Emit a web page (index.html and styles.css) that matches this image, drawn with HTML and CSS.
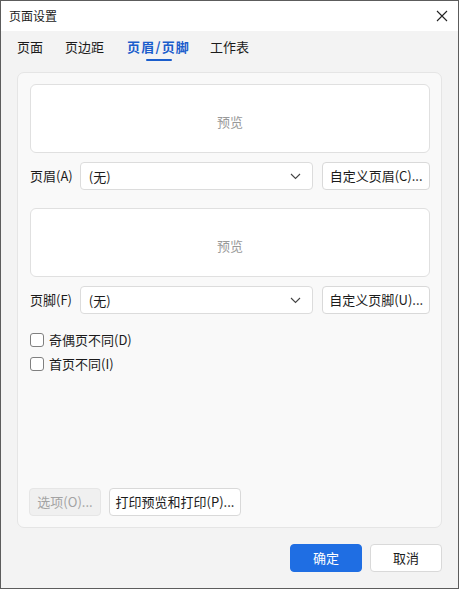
FILE: index.html
```html
<!DOCTYPE html>
<html lang="zh">
<head>
<meta charset="utf-8">
<title>页面设置</title>
<link rel="stylesheet" href="styles.css">
</head>
<body>
<div class="window">
  <div class="titlebar">
    <span class="title">页面设置</span>
    <span class="close">
      <svg width="12" height="12" viewBox="0 0 12 12"><path d="M1 1L11 11M11 1L1 11" stroke="#222" stroke-width="1.1" fill="none"/></svg>
    </span>
  </div>
  <div class="tabs">
    <div class="tab t1"><span class="tab-label">页面</span><span class="tab-line"></span></div>
    <div class="tab t2"><span class="tab-label">页边距</span><span class="tab-line"></span></div>
    <div class="tab t3 active"><span class="tab-label">页眉/页脚</span><span class="tab-line"></span></div>
    <div class="tab t4"><span class="tab-label">工作表</span><span class="tab-line"></span></div>
  </div>
  <div class="panel">
    <div class="preview">预览</div>
    <div class="row">
      <span class="label">页眉(A)</span>
      <div class="select"><span>(无)</span>
        <svg width="11" height="7" viewBox="0 0 11 7"><path d="M1 1L5.5 5.5L10 1" stroke="#444" stroke-width="1.1" fill="none"/></svg>
      </div>
      <button class="btn custom">自定义页眉(C)...</button>
    </div>
    <div class="preview second">预览</div>
    <div class="row">
      <span class="label">页脚(F)</span>
      <div class="select"><span>(无)</span>
        <svg width="11" height="7" viewBox="0 0 11 7"><path d="M1 1L5.5 5.5L10 1" stroke="#444" stroke-width="1.1" fill="none"/></svg>
      </div>
      <button class="btn custom">自定义页脚(U)...</button>
    </div>
    <label class="check first"><span class="box"></span>奇偶页不同(D)</label>
    <label class="check"><span class="box"></span>首页不同(I)</label>
    <div class="spacer"></div>
    <div class="panel-buttons">
      <button class="btn disabled">选项(O)...</button>
      <button class="btn print">打印预览和打印(P)...</button>
    </div>
  </div>
  <div class="footer">
    <button class="btn primary">确定</button>
    <button class="btn cancel">取消</button>
  </div>
</div>
</body>
</html>
```
FILE: styles.css
```css
* { box-sizing: border-box; }
html, body { margin: 0; padding: 0; }
body {
  font-family: "Noto Sans CJK SC", "Noto Sans", sans-serif;
  font-size: 13px;
  color: #1b1b1b;
  background: #fff;
}
.window {
  width: 459px;
  height: 589px;
  border: 1px solid #5c5c5c;
  background: #f3f3f3;
  display: flex;
  flex-direction: column;
}
.titlebar {
  height: 30px;
  background: #fff;
  display: flex;
  align-items: center;
  justify-content: space-between;
  padding: 0 10px 0 8px;
}
.title { font-size: 12px; line-height: 16px; }
.close { display: flex; width: 12px; height: 12px; }
.tabs {
  display: flex;
  padding: 7px 0 0 16px;
  gap: 22px;
}
.tab {
  display: flex;
  flex-direction: column;
  align-items: center;
}
.tab-label { line-height: 18px; font-size: 13px; color: #1b1b1b; }
.tab-line { width: 26px; height: 2px; margin-top: 3px; border-radius: 1px; background: transparent; }
.tab.active .tab-label { color: #1a5dcc; font-weight: bold; letter-spacing: 1.2px; }
.tab.active .tab-line { background: #1a5dcc; }
.t3 { margin-left: 1px; margin-right: -2px; }
.panel {
  margin: 11px 16px 0 16px;
  height: 456px;
  background: #f9f9f9;
  border: 1px solid #e5e5e5;
  border-radius: 7px;
  padding: 11px 11px 11px 12px;
  display: flex;
  flex-direction: column;
}
.preview {
  height: 69px;
  background: #fff;
  border: 1px solid #e0e0e0;
  border-radius: 6px;
  display: flex;
  align-items: center;
  justify-content: center;
  color: #999;
  font-size: 13px;
  padding-top: 6px;
}
.preview.second { margin-top: 18px; height: 69px; padding-top: 6px; }
.row {
  display: flex;
  align-items: center;
  margin-top: 9px;
  height: 28px;
}
.label { width: 50px; line-height: 18px; }
.select {
  width: 234px;
  height: 28px;
  background: #fff;
  border: 1px solid #dcdcdc;
  border-radius: 4px;
  display: flex;
  align-items: center;
  justify-content: space-between;
  padding: 0 11px 0 8px;
}
.btn {
  font-family: inherit;
  font-size: 13px;
  color: #1b1b1b;
  height: 28px;
  background: #fff;
  border: 1px solid #d9d9d9;
  border-radius: 4px;
  padding: 0;
  line-height: 18px;
}
.custom { width: 108px; margin-left: 9px; }
.check {
  display: flex;
  align-items: center;
  height: 18px;
  line-height: 18px;
}
.check.first { margin-top: 17px; }
.check + .check { margin-top: 6px; }
.box {
  width: 14px;
  height: 14px;
  border: 1px solid #808080;
  border-radius: 3px;
  background: #fff;
  margin-right: 5px;
}
.spacer { flex: 1; }
.panel-buttons { display: flex; gap: 8px; margin-left: -1px; }
.disabled {
  width: 72px;
  background: #f0f0f0;
  border-color: #e6e6e6;
  color: #a3a3a3;
}
.print { width: 132px; }
.footer {
  display: flex;
  justify-content: flex-end;
  gap: 8px;
  padding: 16px 16px 0 0;
}
.primary {
  width: 72px;
  background: #1f6ee3;
  border-color: #1f6ee3;
  color: #fff;
}
.cancel { width: 72px; }
```
